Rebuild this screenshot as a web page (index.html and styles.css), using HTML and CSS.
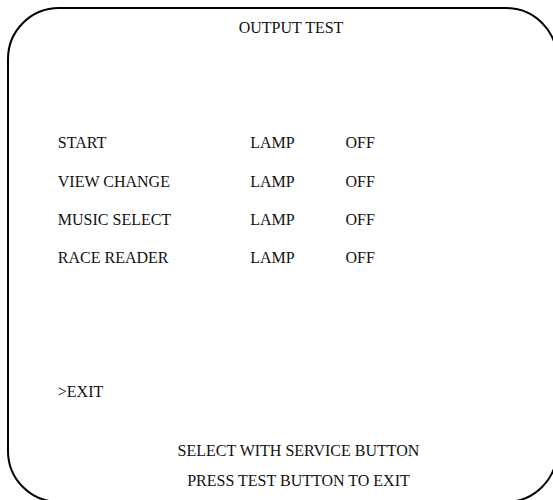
FILE: index.html
```html
<!DOCTYPE html>
<html>
<head>
<meta charset="utf-8">
<title>OUTPUT TEST</title>
<link rel="stylesheet" href="styles.css">
</head>
<body>
<div class="screen">
  <div class="title">OUTPUT TEST</div>
  <div class="table">
    <div class="cell">START</div><div class="cell">LAMP</div><div class="cell">OFF</div>
    <div class="cell">VIEW CHANGE</div><div class="cell">LAMP</div><div class="cell">OFF</div>
    <div class="cell">MUSIC SELECT</div><div class="cell">LAMP</div><div class="cell">OFF</div>
    <div class="cell">RACE READER</div><div class="cell">LAMP</div><div class="cell">OFF</div>
  </div>
  <div class="exit">&gt;EXIT</div>
  <div class="footer first">SELECT WITH SERVICE BUTTON</div>
  <div class="footer second">PRESS TEST BUTTON TO EXIT</div>
</div>
</body>
</html>
```

FILE: styles.css
```css
html, body {
  margin: 0;
  padding: 0;
  overflow: hidden;
  background: #fff;
}
body {
  font-family: "Liberation Serif", "Times New Roman", serif;
  font-size: 16px;
  color: #111;
}
.screen {
  box-sizing: border-box;
  margin: 7px 0 0 7px;
  width: 551px;
  height: 496px;
  border: 2.5px solid #000;
  border-radius: 52px;
  display: flex;
  flex-direction: column;
}
.title {
  line-height: 20px;
  margin-top: 9px;
  text-align: center;
  padding-left: 17px;
}
.table {
  margin-top: 86.4px;
  padding-left: 48.8px;
  display: grid;
  grid-template-columns: 192.4px 95.3px auto;
  grid-auto-rows: 38.33px;
  line-height: 38.33px;
}
.exit {
  margin-top: 104px;
  padding-left: 48.8px;
  line-height: 20px;
}
.footer {
  line-height: 20px;
  text-align: center;
  padding-left: 32px;
}
.footer.first {
  margin-top: 39px;
}
.footer.second {
  margin-top: 10px;
}
```
